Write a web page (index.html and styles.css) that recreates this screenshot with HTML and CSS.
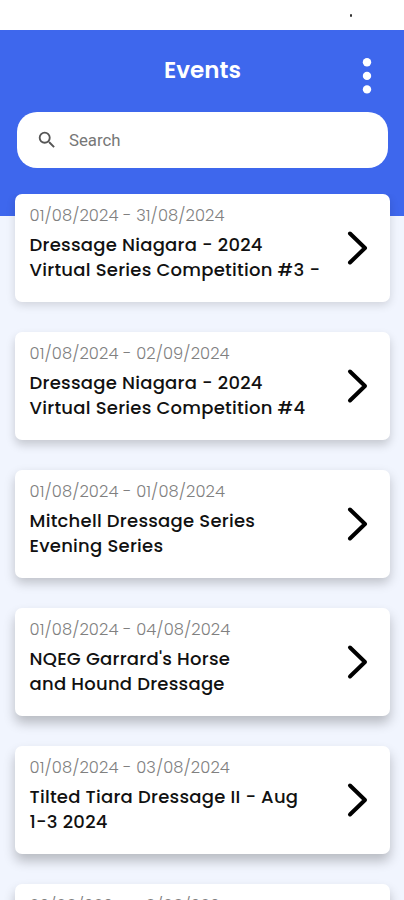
FILE: index.html
```
<!DOCTYPE html>
<html lang="en">
<head>
    <meta charset="UTF-8">
    <meta name="viewport" content="width=device-width, initial-scale=1.0">
    <title>Events</title>
    <link rel="stylesheet" href="styles.css">
</head>
<body>
    <div class="status-bar"><span class="status-dot"></span></div>

    <header class="header">
        <div class="title-row">
            <h1>Events</h1>
            <svg class="menu" width="10" height="38" viewBox="0 0 10 38" fill="#fff">
                <circle cx="5" cy="5.2" r="4.2"/>
                <circle cx="5" cy="18.9" r="4.2"/>
                <circle cx="5" cy="32.4" r="4.2"/>
            </svg>
        </div>
        <div class="search">
            <svg width="22" height="22" viewBox="0 0 24 24" fill="#555">
                <path d="M15.5 14h-.79l-.28-.27A6.47 6.47 0 0 0 16 9.5 6.5 6.5 0 1 0 9.5 16c1.61 0 3.09-.59 4.23-1.57l.27.28v.79l5 4.99L20.49 19l-4.99-5zm-6 0C7.01 14 5 11.99 5 9.5S7.01 5 9.5 5 14 7.01 14 9.5 11.99 14 9.5 14z"/>
            </svg>
            <span>Search</span>
        </div>
    </header>

    <main class="events">
        <div class="card">
            <div class="info">
                <div class="date">01/08/2024 - 31/08/2024</div>
                <div class="name">Dressage Niagara - 2024<br>Virtual Series Competition #3 -</div>
            </div>
            <svg class="arrow" width="22" height="36" viewBox="0 0 22 36"><path d="M3 3.5 18 18 3 32.5"/></svg>
        </div>
        <div class="card">
            <div class="info">
                <div class="date">01/08/2024 - 02/09/2024</div>
                <div class="name">Dressage Niagara - 2024<br>Virtual Series Competition #4</div>
            </div>
            <svg class="arrow" width="22" height="36" viewBox="0 0 22 36"><path d="M3 3.5 18 18 3 32.5"/></svg>
        </div>
        <div class="card">
            <div class="info">
                <div class="date">01/08/2024 - 01/08/2024</div>
                <div class="name">Mitchell Dressage Series<br>Evening Series</div>
            </div>
            <svg class="arrow" width="22" height="36" viewBox="0 0 22 36"><path d="M3 3.5 18 18 3 32.5"/></svg>
        </div>
        <div class="card">
            <div class="info">
                <div class="date">01/08/2024 - 04/08/2024</div>
                <div class="name">NQEG Garrard's Horse<br>and Hound Dressage</div>
            </div>
            <svg class="arrow" width="22" height="36" viewBox="0 0 22 36"><path d="M3 3.5 18 18 3 32.5"/></svg>
        </div>
        <div class="card">
            <div class="info">
                <div class="date">01/08/2024 - 03/08/2024</div>
                <div class="name">Tilted Tiara Dressage II - Aug<br>1-3 2024</div>
            </div>
            <svg class="arrow" width="22" height="36" viewBox="0 0 22 36"><path d="M3 3.5 18 18 3 32.5"/></svg>
        </div>
        <div class="card">
            <div class="info">
                <div class="date">02/08/2024 - 18/08/2024</div>
            </div>
        </div>
    </main>
</body>
</html>
```
FILE: styles.css
```
* {
    box-sizing: border-box;
}
body {
    margin: 0;
    height: 900px;
    overflow: hidden;
    background-color: #f1f5fe;
    font-family: Poppins, Inter, sans-serif;
}
.status-bar {
    height: 30px;
    padding: 14px 52px 0 0;
    background-color: #fff;
    display: flex;
    justify-content: flex-end;
}
.status-dot {
    width: 2px;
    height: 3px;
    border-radius: 1px;
    background-color: #333;
}
.header {
    height: 186px;
    padding: 0 16px 0 17px;
    background-color: #3e67ed;
}
.title-row {
    height: 82px;
    display: grid;
    grid-template-columns: 1fr auto 1fr;
}
.title-row h1 {
    grid-column: 2;
    margin: 0;
    padding-top: 25px;
    font-size: 23px;
    line-height: 30px;
    font-weight: 600;
    color: #fff;
}
.menu {
    justify-self: end;
    margin: 27px 16.5px 0 0;
}
.search {
    height: 56px;
    padding-left: 19px;
    border-radius: 20px;
    background-color: #fff;
    display: flex;
    align-items: center;
    gap: 11px;
    font-family: Roboto, sans-serif;
    font-size: 16.8px;
    color: #777;
}
.events {
    height: 706px;
    margin-top: -22px;
    padding: 0 14px 0 15px;
    overflow: hidden;
    display: flex;
    flex-direction: column;
    gap: 30px;
}
.card {
    flex: none;
    height: 108px;
    padding: 10px 21.5px 0 14.5px;
    border-radius: 7px;
    background-color: #fff;
    display: flex;
    justify-content: space-between;
    box-shadow: 0 3px 10px rgba(0, 0, 0, 0.14);
}
/* the shadow gets deeper further down the list */
.card:nth-child(2) {
    box-shadow: 0 5px 10px rgba(0, 0, 0, 0.18);
}
.card:nth-child(3) {
    box-shadow: 0 5px 11px rgba(0, 0, 0, 0.21);
}
.card:nth-child(n+4) {
    box-shadow: 0 7px 12px rgba(0, 0, 0, 0.24);
}
.date {
    font-size: 16.3px;
    line-height: 24px;
    font-weight: 300;
    letter-spacing: 0.1px;
    color: #808080;
    white-space: nowrap;
}
.name {
    padding-top: 3.9px;
    font-size: 18px;
    line-height: 25.5px;
    font-weight: 500;
    letter-spacing: 0.25px;
    color: #111;
    white-space: nowrap;
}
.arrow {
    margin-top: 26px;
    fill: none;
    stroke: #000;
    stroke-width: 4;
    stroke-linecap: round;
    stroke-linejoin: round;
}
```
